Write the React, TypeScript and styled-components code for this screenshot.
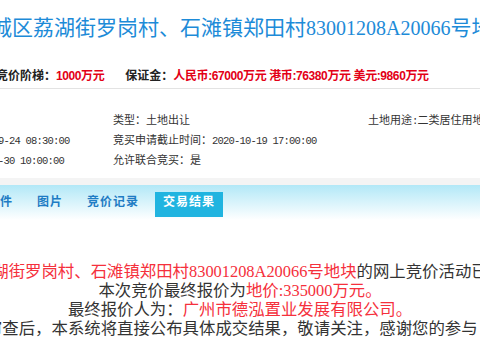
import React from "react";
import styled, { createGlobalStyle } from "styled-components";

const GlobalStyle = createGlobalStyle`
  html, body {
    margin: 0;
    padding: 0;
    overflow: hidden;
    background: #fff;
  }
  body {
    font-family: "Liberation Sans", "Noto Sans CJK SC", sans-serif;
    color: #333;
  }
`;

const Page = styled.div`
  width: 1000px;
  margin-left: -120px;
`;

const Title = styled.h1`
  margin: 0;
  padding: 13px 0 0 27px;
  font-family: "Liberation Serif", "Noto Sans CJK SC", serif;
  font-size: 21px;
  line-height: 30px;
  font-weight: normal;
  color: #1d8bd8;
  white-space: nowrap;
`;

const Code = styled.span`
  font-size: 20px;
`;

const PriceRow = styled.div`
  display: flex;
  gap: 21px;
  padding: 23px 0 2px 116px;
  font-size: 12px;
  line-height: 20px;
  font-weight: bold;
  color: #222;
  white-space: nowrap;
`;

const PriceValue = styled.span`
  color: #e30016;
  letter-spacing: -0.4px;
`;

const Red = styled.span`
  color: #f5303c;
`;

const Info = styled.div`
  border-top: 1px solid #e3e3e3;
  padding: 21px 0 8px 8px;
  display: grid;
  grid-template-columns: 225px 255px 1fr;
  grid-auto-rows: 20px;
  font-size: 11px;
  line-height: 20px;
  color: #333;
  white-space: nowrap;
`;

const Cell = styled.div``;

const Mono = styled.span`
  font-family: "Liberation Mono", monospace;
  font-size: 10.5px;
  letter-spacing: -0.8px;
`;

const Band = styled.div`
  height: 7px;
  background: #f4f4f4;
`;

const TabBar = styled.div`
  box-sizing: border-box;
  height: 35px;
  padding: 7px 0 0 49px;
  display: flex;
  align-items: flex-start;
  gap: 8px;
  background: linear-gradient(#b2e8f7, #ffffff);
`;

const Tab = styled.div<{ $active?: boolean }>`
  height: 25px;
  padding: 0 8px;
  line-height: 21px;
  font-size: 12px;
  font-weight: bold;
  letter-spacing: 1px;
  white-space: nowrap;
  color: ${(p) => (p.$active ? "#ffffff" : "#1f7cc4")};
  background: ${(p) => (p.$active ? "#20b4e0" : "transparent")};
`;

const Result = styled.div`
  width: 720px;
  padding-top: 42px;
  text-align: center;
  font-family: "Liberation Serif", "Noto Sans CJK SC", serif;
  font-size: 16.4px;
  line-height: 19px;
  color: #333;
  white-space: nowrap;
`;

const Line = styled.p`
  margin: 0;
`;

const tabs = ["须知", "附件", "图片", "竞价记录", "交易结果"];

export default function App() {
  return (
    <>
      <GlobalStyle />
      <Page>
        <Title>
          广州市增城区荔湖街罗岗村、石滩镇郑田村<Code>83001208A20066</Code>号地块
        </Title>
        <PriceRow>
          <span>
            竞价阶梯：<PriceValue>1000万元</PriceValue>
          </span>
          <span>
            保证金：<PriceValue>人民币:67000万元 港币:76380万元 美元:9860万元</PriceValue>
          </span>
        </PriceRow>
        <Info>
          <Cell />
          <Cell>类型：土地出让</Cell>
          <Cell>
            土地用途<Mono>:</Mono>二类居住用地
          </Cell>
          <Cell>
            挂牌开始时间：<Mono>2020-09-24 08:30:00</Mono>
          </Cell>
          <Cell>
            竞买申请截止时间：<Mono>2020-10-19 17:00:00</Mono>
          </Cell>
          <Cell />
          <Cell>
            挂牌截止时间<Mono>:2020-09-30 10:00:00</Mono>
          </Cell>
          <Cell>允许联合竞买：是</Cell>
          <Cell />
        </Info>
        <Band />
        <TabBar>
          {tabs.map((t) => (
            <Tab key={t} $active={t === "交易结果"}>
              {t}
            </Tab>
          ))}
        </TabBar>
        <Result>
          <Line>
            <Red>增城区荔湖街罗岗村、石滩镇郑田村83001208A20066号地块</Red>
            的网上竞价活动已经结束，
          </Line>
          <Line>
            本次竞价最终报价为<Red>地价:335000万元。</Red>
          </Line>
          <Line>
            最终报价人为：<Red>广州市德泓置业发展有限公司。</Red>
          </Line>
          <Line>审查后，本系统将直接公布具体成交结果，敬请关注，感谢您的参与！</Line>
        </Result>
      </Page>
    </>
  );
}
